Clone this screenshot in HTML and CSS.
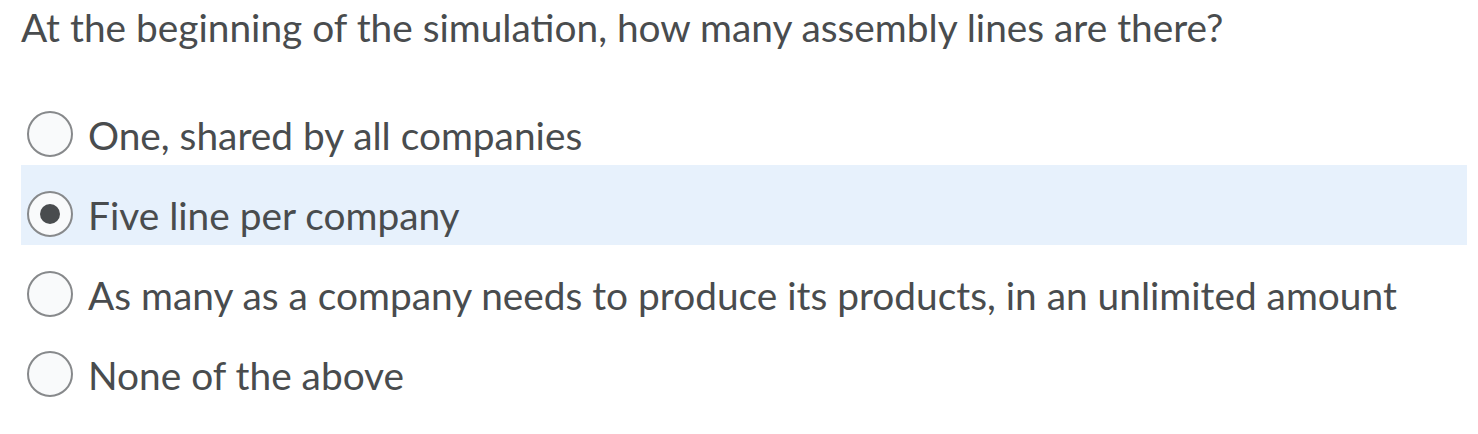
FILE: index.html
```html
<!DOCTYPE html>
<html>
<head>
<meta charset="utf-8">
<link rel="stylesheet" href="styles.css">
</head>
<body>
<div class="question">
  <div class="prompt">At the beginning of the simulation, how many assembly lines are there?</div>
  <div class="options">
    <div class="option"><span class="radio"></span><span class="label">One, shared by all companies</span></div>
    <div class="option selected"><span class="radio"></span><span class="label">Five line per company</span></div>
    <div class="option"><span class="radio"></span><span class="label">As many as a company needs to produce its products, in an unlimited amount</span></div>
    <div class="option"><span class="radio"></span><span class="label">None of the above</span></div>
  </div>
</div>
</body>
</html>
```

FILE: styles.css
```css
html, body {
  margin: 0;
  padding: 0;
  background: #ffffff;
}
.question {
  font-family: Lato, "Liberation Sans", sans-serif;
  color: #494c4e;
  padding: 3px 11px 0 21px;
}
.prompt {
  font-size: 38.85px;
  line-height: 48px;
  height: 82px;
}
.options {
  display: flex;
  flex-direction: column;
}
.option {
  height: 80px;
  box-sizing: border-box;
  padding: 26px 0 0 6px;
  display: flex;
  align-items: flex-start;
  gap: 15px;
}
.option.selected {
  background: #e7f1fc;
}
.radio {
  width: 46px;
  height: 46px;
  box-sizing: border-box;
  border: 2px solid #87898b;
  border-radius: 50%;
  background: #f9fafb;
  flex: none;
  display: flex;
  align-items: center;
  justify-content: center;
}
.selected .radio::after {
  content: "";
  width: 20px;
  height: 20px;
  border-radius: 50%;
  background: #494c4e;
}
.label {
  font-size: 38.85px;
  line-height: 46px;
  padding-top: 1px;
}
```
